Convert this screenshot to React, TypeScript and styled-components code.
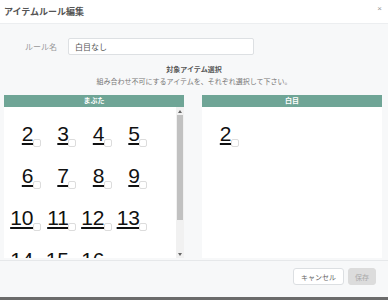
import React from "react";
import styled, { createGlobalStyle } from "styled-components";

const GlobalStyle = createGlobalStyle`
  html, body {
    margin: 0;
    padding: 0;
  }
  body {
    width: 388px;
    height: 300px;
    overflow: hidden;
    background: #f7f8f9;
    font-family: "Liberation Sans", "Noto Sans CJK JP", sans-serif;
  }
`;

const Modal = styled.div`
  display: flex;
  flex-direction: column;
  height: 300px;
`;

const Header = styled.div`
  display: flex;
  align-items: center;
  justify-content: space-between;
  height: 23px;
  padding: 0 6px 0 4px;
  background: #fff;
  border-bottom: 1px solid #eceef0;
`;

const Title = styled.h1`
  margin: 0;
  font-size: 9px;
  font-weight: 700;
  color: #555;
`;

const Close = styled.span`
  font-size: 8px;
  color: #999;
  margin-top: -6px;
`;

const RuleRow = styled.div`
  display: flex;
  align-items: center;
  gap: 11px;
  margin-top: 14px;
  padding-left: 25px;
`;

const Label = styled.span`
  width: 32px;
  font-size: 8px;
  color: #999;
`;

const Input = styled.input`
  box-sizing: border-box;
  width: 186px;
  height: 17px;
  padding: 0 6px;
  border: 1px solid #dde0e3;
  border-radius: 2px;
  background: #fff;
  font-family: inherit;
  font-size: 8px;
  color: #555;
  outline: none;
`;

const SectionTitle = styled.div`
  margin-top: 11px;
  font-size: 7px;
  line-height: 8px;
  font-weight: 700;
  color: #555;
  text-align: center;
`;

const SectionNote = styled.div`
  margin-top: 4px;
  font-size: 7px;
  line-height: 8px;
  color: #777;
  text-align: center;
`;

const Panels = styled.div`
  display: grid;
  grid-template-columns: 180px 180px;
  column-gap: 18px;
  margin-top: 9px;
  padding-left: 4px;
`;

const Panel = styled.section`
  display: flex;
  flex-direction: column;
`;

const PanelHeader = styled.div`
  height: 12px;
  line-height: 12px;
  background: #6fa596;
  color: #fff;
  font-size: 7px;
  font-weight: 700;
  text-align: center;
`;

const PanelBody = styled.div`
  display: flex;
  height: 151px;
  background: #fff;
`;

const ListArea = styled.div`
  flex: 1;
  overflow: hidden;
`;

const ScrollBar = styled.div`
  display: flex;
  flex-direction: column;
  width: 8px;
  background: #f1f1f1;
`;

const ScrollArrow = styled.div`
  display: flex;
  align-items: center;
  justify-content: center;
  height: 8px;
`;

const ScrollTrack = styled.div`
  flex: 1;
  padding: 0 1px;
`;

const ScrollThumb = styled.div`
  height: 105px;
  background: #c1c1c1;
`;

const NumberGrid = styled.div`
  display: grid;
  grid-template-columns: repeat(4, 35.5px);
  row-gap: 16px;
  padding: 14px 0 32px 1px;
`;

const Cell = styled.label`
  display: flex;
  align-items: flex-end;
  justify-content: flex-end;
  height: 26px;
  cursor: pointer;
`;

const Num = styled.span`
  font-family: "Liberation Sans", sans-serif;
  font-size: 21px;
  line-height: 26px;
  color: #111;
  text-decoration: underline;
  text-decoration-thickness: 1.5px;
  text-underline-offset: 2px;
`;

const Box = styled.span`
  box-sizing: border-box;
  flex-shrink: 0;
  width: 8px;
  height: 8px;
  margin-left: -1px;
  border: 1px solid #dcdcdc;
  border-radius: 2px;
  background: #fff;
`;

const Footer = styled.div`
  flex: 1;
  display: flex;
  justify-content: flex-end;
  align-items: flex-start;
  gap: 4px;
  margin-top: 2px;
  padding: 7px 12px 0 0;
  border-top: 1px solid #e6e8ea;
`;

const Button = styled.button<{ $primary?: boolean }>`
  box-sizing: border-box;
  height: 17px;
  padding: 0 ${(p) => (p.$primary ? "6px" : "7px")};
  border: 1px solid ${(p) => (p.$primary ? "#dcdcdc" : "#dcdfe2")};
  border-radius: 3px;
  background: ${(p) => (p.$primary ? "#dcdcdc" : "#fff")};
  color: ${(p) => (p.$primary ? "#aaa" : "#666")};
  font-family: inherit;
  font-size: 7px;
`;

const BottomBar = styled.div`
  height: 3px;
  background: #6b6b6b;
`;

const Arrow = ({ down }: { down?: boolean }) => (
  <svg width="4" height="3" viewBox="0 0 4 3">
    <path d={down ? "M0 0H4L2 3Z" : "M0 3H4L2 0Z"} fill="#666" />
  </svg>
);

const NumberList = ({ items }: { items: number[] }) => (
  <NumberGrid>
    {items.map((n) => (
      <Cell key={n}>
        <Num>{n}</Num>
        <Box />
      </Cell>
    ))}
  </NumberGrid>
);

const leftItems = Array.from({ length: 15 }, (_, i) => i + 2);

const App = () => {
  return (
    <>
      <GlobalStyle />
      <Modal>
        <Header>
          <Title>アイテムルール編集</Title>
          <Close>×</Close>
        </Header>

        <RuleRow>
          <Label>ルール名</Label>
          <Input defaultValue="白目なし" />
        </RuleRow>

        <SectionTitle>対象アイテム選択</SectionTitle>
        <SectionNote>組み合わせ不可にするアイテムを、それぞれ選択して下さい。</SectionNote>

        <Panels>
          <Panel>
            <PanelHeader>まぶた</PanelHeader>
            <PanelBody>
              <ListArea>
                <NumberList items={leftItems} />
              </ListArea>
              <ScrollBar>
                <ScrollArrow>
                  <Arrow />
                </ScrollArrow>
                <ScrollTrack>
                  <ScrollThumb />
                </ScrollTrack>
                <ScrollArrow>
                  <Arrow down />
                </ScrollArrow>
              </ScrollBar>
            </PanelBody>
          </Panel>
          <Panel>
            <PanelHeader>白目</PanelHeader>
            <PanelBody>
              <ListArea>
                <NumberList items={[2]} />
              </ListArea>
            </PanelBody>
          </Panel>
        </Panels>

        <Footer>
          <Button>キャンセル</Button>
          <Button $primary>保存</Button>
        </Footer>
        <BottomBar />
      </Modal>
    </>
  );
};

export default App;
